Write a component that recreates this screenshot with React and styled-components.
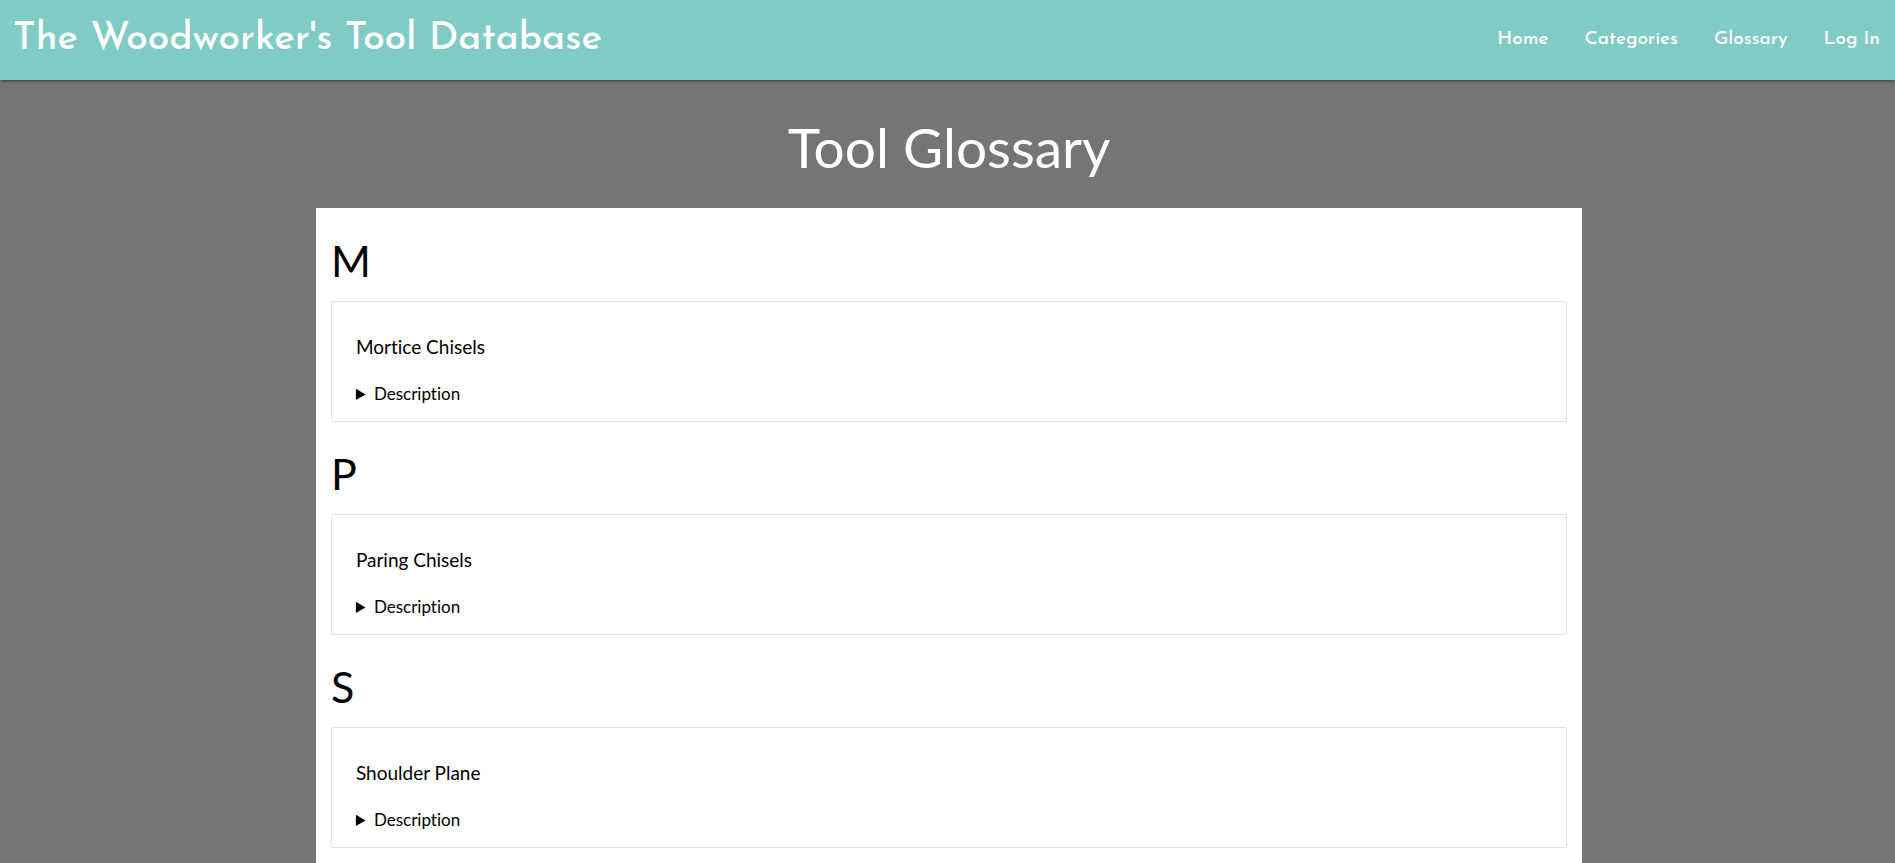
import React from "react";
import styled, { createGlobalStyle } from "styled-components";

const GlobalStyle = createGlobalStyle`
  *, *::before, *::after { box-sizing: border-box; }
  body {
    margin: 0;
    background: #757575;
    color: #000;
    font-family: Lato, "Liberation Sans", sans-serif;
    font-size: 17px;
    font-variant-ligatures: none;
    line-height: 26px;
  }
`;

const NavBar = styled.nav`
  position: relative;
  display: flex;
  align-items: center;
  justify-content: space-between;
  min-height: 80px;
  padding: 0 15px 0 13px;
  background: #80cbc4;
  box-shadow: 0 2px 2px 0 rgba(0, 0, 0, 0.14), 0 3px 1px -2px rgba(0, 0, 0, 0.12),
    0 1px 5px 0 rgba(0, 0, 0, 0.2);
  font-family: "Josefin Sans", Lato, sans-serif;
  font-weight: 500;
`;

const Brand = styled.a`
  color: #fff;
  font-size: 39px;
  line-height: 48px;
  text-decoration: none;
  white-space: nowrap;
`;

const NavLinks = styled.ul`
  display: flex;
  gap: 36px;
  margin: 0;
  padding: 0;
  list-style: none;
`;

const NavLink = styled.a`
  color: #fff;
  font-size: 19px;
  line-height: 24px;
  text-decoration: none;
  white-space: nowrap;
`;

const Main = styled.main`
  padding: 34px 16.5% 0 16.67%;
`;

const PageTitle = styled.h1`
  margin: 0 0 28px;
  color: #fff;
  font-size: 55px;
  font-weight: 400;
  line-height: 66px;
  text-align: center;
`;

const Panel = styled.div`
  padding: 29px 15px 15px;
  background: #fff;
`;

const Group = styled.section`
  margin-bottom: 28px;
`;

const Letter = styled.h2`
  margin: 0 0 16px;
  font-size: 43px;
  font-weight: 400;
  line-height: 48px;
`;

const Entry = styled.article`
  padding: 29px 24px 14px;
  border: 1px solid #e0e0e0;
  border-radius: 2px;
`;

const EntryName = styled.h3`
  margin: 0 0 18px;
  font-size: 19px;
  font-weight: 400;
  line-height: 32px;
`;

const Summary = styled.summary`
  cursor: pointer;
`;

const links = ["Home", "Categories", "Glossary", "Log In"];

const glossary = [
  { letter: "M", tools: ["Mortice Chisels"] },
  { letter: "P", tools: ["Paring Chisels"] },
  { letter: "S", tools: ["Shoulder Plane"] },
];

export default function App() {
  return (
    <>
      <GlobalStyle />
      <NavBar>
        <Brand href="#">The Woodworker's Tool Database</Brand>
        <NavLinks>
          {links.map((label) => (
            <li key={label}>
              <NavLink href="#">{label}</NavLink>
            </li>
          ))}
        </NavLinks>
      </NavBar>
      <Main>
        <PageTitle>Tool Glossary</PageTitle>
        <Panel>
          {glossary.map(({ letter, tools }) => (
            <Group key={letter}>
              <Letter>{letter}</Letter>
              {tools.map((tool) => (
                <Entry key={tool}>
                  <EntryName>{tool}</EntryName>
                  <details>
                    <Summary>Description</Summary>
                  </details>
                </Entry>
              ))}
            </Group>
          ))}
        </Panel>
      </Main>
    </>
  );
}
